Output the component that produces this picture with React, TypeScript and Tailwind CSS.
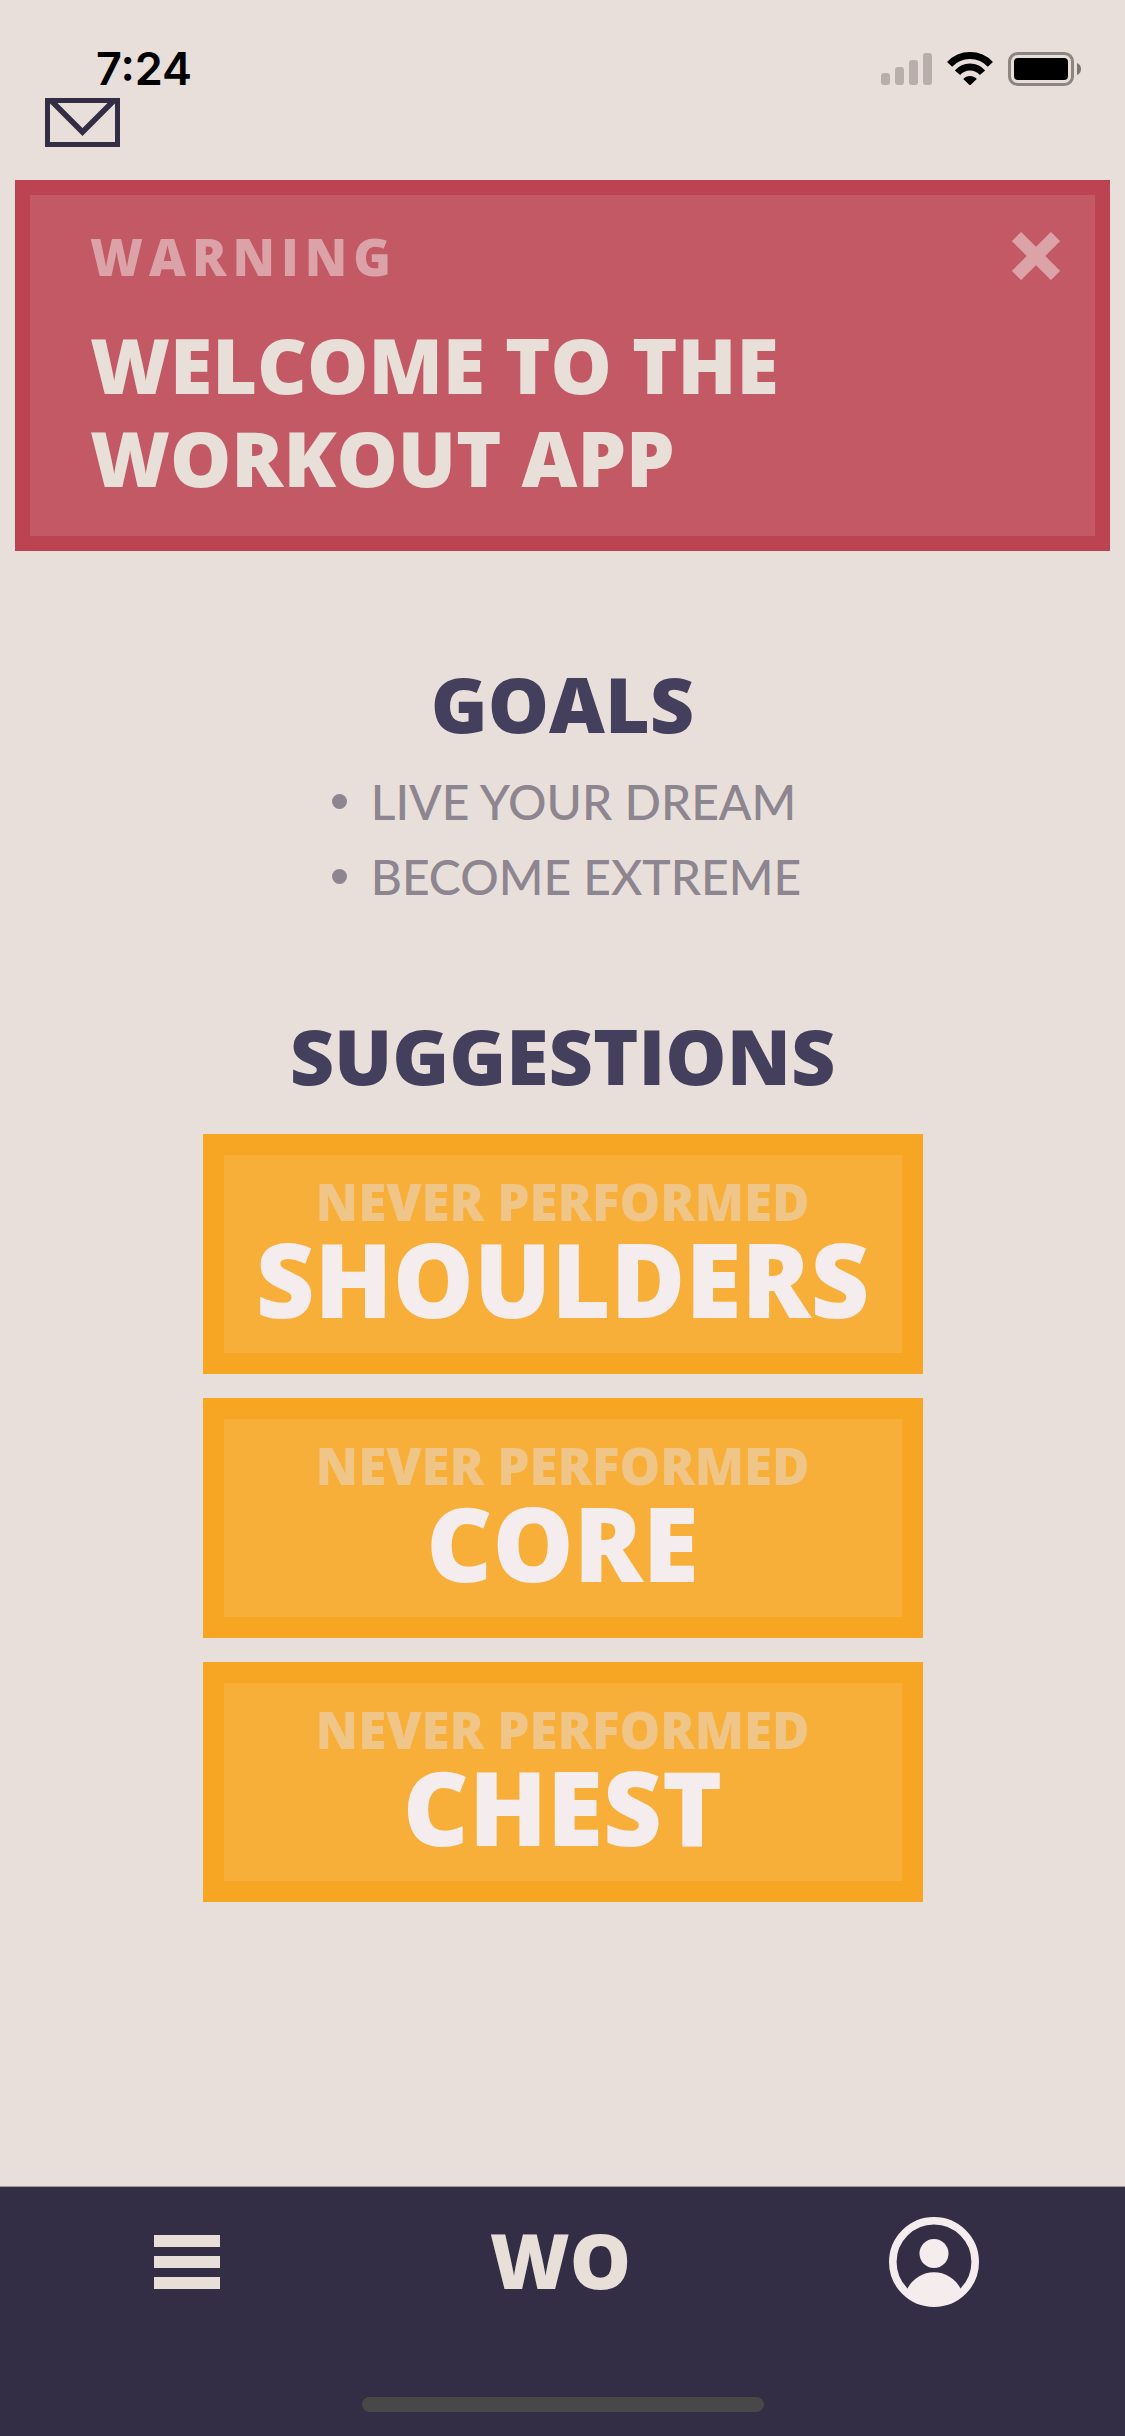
import React from "react";

const goals = ["LIVE YOUR DREAM", "BECOME EXTREME"];
const suggestions = ["SHOULDERS", "CORE", "CHEST"];

function StatusIcons() {
  return (
    <div className="flex items-center gap-[15px]">
      <svg width="51" height="34" viewBox="0 0 51 34" fill="#b9aeac" aria-label="Signal">
        <rect x="0" y="21" width="9" height="12" rx="3" />
        <rect x="14" y="15" width="9" height="18" rx="3" />
        <rect x="28" y="8" width="9" height="25" rx="3" />
        <rect x="42" y="1" width="9" height="32" rx="3" />
      </svg>
      <svg width="46" height="34" viewBox="0 0 46 34" aria-label="Wi-Fi">
        <g fill="none" stroke="#000" strokeWidth="7">
          <path d="M2.600 12.400 A28 28 0 0 1 43.400 12.400" />
          <path d="M10.500 20.700 A16.500 16.500 0 0 1 35.500 20.700" />
        </g>
        <path d="M16.200 27 A9 9 0 0 1 29.800 27 L24 32.600 Q23 33.600 22 32.600 Z" />
      </svg>
      <svg width="74" height="34" viewBox="0 0 74 34" aria-label="Battery">
        <rect x="1.500" y="1.500" width="63" height="31" rx="8" fill="none" stroke="#8c8683" strokeWidth="3" />
        <rect x="6" y="6" width="54" height="22" rx="4" />
        <path d="M69 11 Q73 12.500 73 17 Q73 21.500 69 23 Z" fill="#7a7573" />
      </svg>
    </div>
  );
}

function Card({ name }: { name: string }) {
  return (
    <button
      type="button"
      className="block w-full border-[21px] border-[#f7a623] bg-[#f8af3a] pt-[22px] pb-[26px] text-center"
    >
      <span className="block text-[51px] leading-[48px] text-[#efc688]">NEVER PERFORMED</span>
      <span className="mt-1.5 block text-[102px] leading-[96px] text-[#f5ecee]">{name}</span>
    </button>
  );
}

export default function App() {
  return (
    <div className="flex min-h-screen flex-col bg-[#e8dfda] font-['Open_Sans',sans-serif] font-extrabold">
      <header>
        <div className="flex h-[98px] items-end justify-between pr-[43px] pb-3 pl-24">
          <span className="font-['Inter',sans-serif] text-[45px] leading-[34px] font-semibold text-black">7:24</span>
          <StatusIcons />
        </div>
        <button type="button" aria-label="Messages" className="ml-[45px] block">
          <svg width="75" height="49" viewBox="0 0 75 49" fill="none" stroke="#332e45" strokeWidth="5">
            <rect x="2.500" y="2.500" width="70" height="44" />
            <path d="M5.500 2 L37.500 34 L69.500 2" strokeWidth="5.500" />
          </svg>
        </button>
      </header>

      <section className="mx-[15px] mt-[33px] border-[15px] border-[#bc4352] bg-[#c25964] pt-[34px] pb-8 pl-[60px]">
        <div className="flex items-center justify-between pr-[35px]">
          <h2 className="text-[51px] leading-[54px] tracking-[6px] text-[#dba2a8]">WARNING</h2>
          <button type="button" aria-label="Dismiss">
            <svg width="48" height="48" viewBox="0 0 48 48" fill="none" stroke="#dba2a8" strokeWidth="13">
              <path d="M4.500 4.500 L43.500 43.500 M43.500 4.500 L4.500 43.500" />
            </svg>
          </button>
        </div>
        <p className="mt-[35px] max-w-[800px] text-[77px] leading-[93px] text-[#e8dfd8]">WELCOME TO THE WORKOUT APP</p>
      </section>

      <main className="mx-auto w-[64%]">
        <h1 className="mt-[106px] text-center text-[77px] leading-[93px] text-[#433f5c]">GOALS</h1>
        <ul className="mx-auto mt-3.5 w-fit pl-2 font-['Lato',sans-serif] text-[48px] leading-[75px] font-medium text-[#8d858f]">
          {goals.map((g) => (
            <li key={g} className="flex items-center gap-6">
              <span className="size-[15px] rounded-full bg-[#8d858f]" />
              {g}
            </li>
          ))}
        </ul>
        <h1 className="mt-[95px] text-center text-[77px] leading-[93px] text-[#433f5c]">SUGGESTIONS</h1>
        <div className="mt-8 flex flex-col gap-6">
          {suggestions.map((s) => (
            <Card key={s} name={s} />
          ))}
        </div>
      </main>

      <nav className="mt-auto border-t border-[#a69c93] bg-[#332e45] pt-[30px] pb-6">
        <div className="mr-1 grid h-[90px] grid-cols-3 place-items-center">
          <button type="button" aria-label="Menu" className="flex w-[66px] flex-col gap-[9px]">
            <span className="h-3 bg-[#e8dfd8]" />
            <span className="h-3 bg-[#e8dfd8]" />
            <span className="h-3 bg-[#e8dfd8]" />
          </button>
          <a href="#home" className="pb-1 text-[77px] leading-[86px] text-[#e8dfd8]">WO</a>
          <button type="button" aria-label="Profile">
            <svg width="90" height="90" viewBox="0 0 90 90" fill="#f5ecee">
              <circle cx="45" cy="45" r="41.200" fill="none" stroke="#f5ecee" strokeWidth="7.600" />
              <circle cx="45" cy="36.500" r="14.500" />
              <path d="M18.500 71.500 A29.800 29.800 0 0 1 71.500 71.500 L68 78 A41 41 0 0 1 22 78 Z" />
            </svg>
          </button>
        </div>
        <div className="mx-auto mt-[90px] h-[15px] w-[402px] rounded-full bg-[#484848]" />
      </nav>
    </div>
  );
}
